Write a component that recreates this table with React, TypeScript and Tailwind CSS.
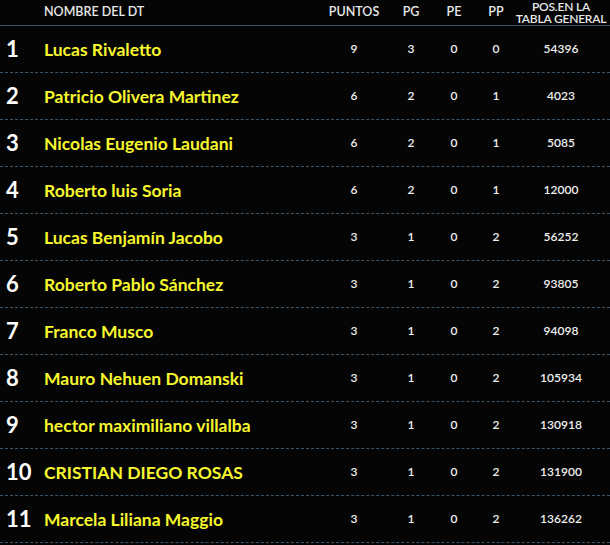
import React from "react";

const rows: [number, string, number, number, number, number, number][] = [
  [1, "Lucas Rivaletto", 9, 3, 0, 0, 54396],
  [2, "Patricio Olivera Martinez", 6, 2, 0, 1, 4023],
  [3, "Nicolas Eugenio Laudani", 6, 2, 0, 1, 5085],
  [4, "Roberto luis Soria", 6, 2, 0, 1, 12000],
  [5, "Lucas Benjamín Jacobo", 3, 1, 0, 2, 56252],
  [6, "Roberto Pablo Sánchez", 3, 1, 0, 2, 93805],
  [7, "Franco Musco", 3, 1, 0, 2, 94098],
  [8, "Mauro Nehuen Domanski", 3, 1, 0, 2, 105934],
  [9, "hector maximiliano villalba", 3, 1, 0, 2, 130918],
  [10, "CRISTIAN DIEGO ROSAS", 3, 1, 0, 2, 131900],
  [11, "Marcela Liliana Maggio", 3, 1, 0, 2, 136262],
];

const grid = "grid grid-cols-[44px_273px_74px_40px_46px_38px_92px] items-center";

export default function App() {
  return (
    <div
      className="w-[610px] h-[545px] bg-[#050505] text-white overflow-hidden"
      style={{ fontFamily: "Lato, 'Noto Sans', sans-serif" }}
    >
      <div className={`${grid} h-[26px] border-b border-[#3d5566] font-semibold text-[#e8e8e8]`}>
        <div />
        <div className="text-[12.5px] leading-none">NOMBRE DEL DT</div>
        <div className="text-center text-[12.5px] leading-none">PUNTOS</div>
        <div className="text-center text-[12.5px] leading-none">PG</div>
        <div className="text-center text-[12.5px] leading-none">PE</div>
        <div className="text-center text-[12.5px] leading-none">PP</div>
        <div className="flex flex-col items-center text-[12px] leading-[12px] whitespace-nowrap tracking-[-0.2px]">
          <span>POS.EN LA</span>
          <span>TABLA GENERAL</span>
        </div>
      </div>
      {rows.map(([n, name, pts, pg, pe, pp, pos]) => (
        <div
          key={n}
          className={`${grid} h-[47px] border-b border-dashed border-[#3d5566]`}
        >
          <div className="pl-[6px] text-[22px] font-bold text-white leading-none">{n}</div>
          <div className="text-[17.5px] font-bold text-[#f7f72e] leading-none whitespace-nowrap pt-[2px]">{name}</div>
          <div className="text-center text-[12px] font-semibold text-[#f0f0f0]">{pts}</div>
          <div className="text-center text-[12px] font-semibold text-[#f0f0f0]">{pg}</div>
          <div className="text-center text-[12px] font-semibold text-[#f0f0f0]">{pe}</div>
          <div className="text-center text-[12px] font-semibold text-[#f0f0f0]">{pp}</div>
          <div className="text-center text-[12px] font-semibold text-[#f0f0f0]">{pos}</div>
        </div>
      ))}
    </div>
  );
}
